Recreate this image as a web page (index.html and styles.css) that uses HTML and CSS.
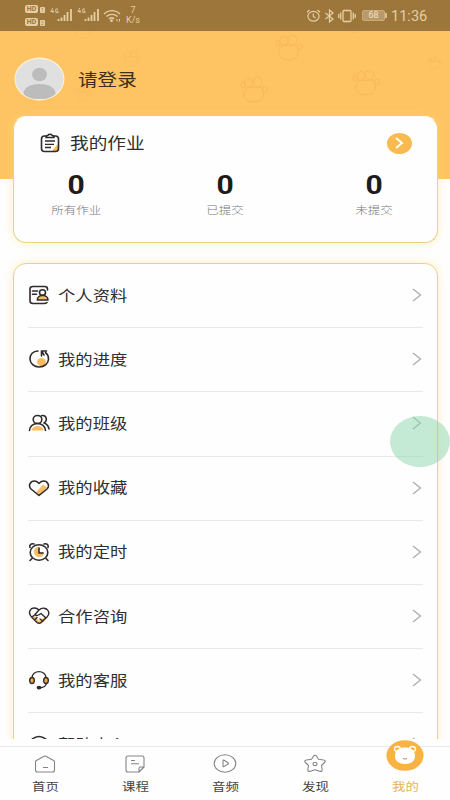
FILE: index.html
```html
<!DOCTYPE html>
<html lang="zh-CN">
<head>
<meta charset="utf-8">
<title>我的</title>
<link rel="stylesheet" href="styles.css">
</head>
<body>
<svg class="defs" width="0" height="0">
  <symbol id="paw" viewBox="0 0 28 28">
    <path d="M5 14C2 20 5 26 13 26s12-5 10-11c-1-4-4-5-8-3-4-2-8-1-10 2z"/>
    <ellipse cx="9" cy="7" rx="4" ry="4.500"/><ellipse cx="17.500" cy="6" rx="4.500" ry="5"/><ellipse cx="3" cy="9" rx="2" ry="3"/><ellipse cx="25" cy="13" rx="2.500" ry="3"/>
  </symbol>
  <symbol id="chev" viewBox="0 0 10 14"><path d="M1 1l7.500 6L1 13"/></symbol>
  <symbol id="signal" viewBox="0 0 24 16">
    <path d="M8.500 13v-2M11.500 13V9.500M14.500 13V7M17.500 13V4M21 13V1" fill="none" stroke="#e6cfa2" stroke-width="1.800"/>
    <path d="M2.800 0L.8 3.500h3M3 2v3M8 1H5.800v3.500H8V3H7" fill="none" stroke="#e6cfa2" stroke-width=".9"/>
  </symbol>
</svg>
<div class="phone">
  <div class="content">
    <header class="hero">
      <svg class="paw p1"><use href="#paw"/></svg>
      <svg class="paw p2"><use href="#paw"/></svg>
      <svg class="paw p3"><use href="#paw"/></svg>
      <svg class="paw p4"><use href="#paw"/></svg>
      <svg class="paw p5"><use href="#paw"/></svg>
      <svg class="paw p6"><use href="#paw"/></svg>
      <svg class="paw p7"><use href="#paw"/></svg>
      <svg class="paw p8"><use href="#paw"/></svg>
      <div class="status">
        <div class="hd"><div><b>HD</b><i>1</i></div><div><b>HD</b><i>2</i></div></div>
        <svg class="sig" width="24" height="16"><use href="#signal"/></svg>
        <svg class="sig" width="24" height="16"><use href="#signal"/></svg>
        <svg class="wifi" width="18" height="14" viewBox="0 0 18 14" fill="none" stroke="#e6cfa2" stroke-width="1.400"><path d="M1 5c4.500-4.500 11.500-4.500 16 0M3.500 7.600c3-3 8-3 11 0M6 10c1.800-1.600 3.700-1.600 5 0"/><circle cx="8.500" cy="11.700" r=".7"/><path d="M14 10v2.500M16.500 10v2.500" stroke-width="1"/></svg>
        <div class="speed"><span>7</span><span>K/s</span></div>
        <div class="right">
          <svg width="15" height="14" viewBox="0 0 15 14" fill="none" stroke="#e6cfa2" stroke-width="1.200"><ellipse cx="7.500" cy="7.300" rx="5.600" ry="4.900"/><path d="M7.300 4.500v3l2.300 1.500M1 3.200L3.500 1M14 3.200L11.500 1"/></svg>
          <svg width="11" height="14" viewBox="0 0 11 14" fill="none" stroke="#e6cfa2" stroke-width="1.200"><path d="M1.500 4l7.500 6-3.500 3V1L9 4l-7.500 6"/></svg>
          <svg width="18" height="14" viewBox="0 0 18 14" fill="none" stroke="#e6cfa2" stroke-width="1.300"><rect x="5" y="1.500" width="8" height="11" rx="1"/><path d="M2.700 3.500v7M.8 5v4M15.300 3.500v7M17.200 5v4"/></svg>
          <div class="battery">68</div>
          <div class="clock">11:36</div>
        </div>
      </div>
      <div class="user">
        <svg width="51" height="44" viewBox="0 0 51 44"><defs><clipPath id="av"><ellipse cx="25.500" cy="22" rx="24" ry="20.500"/></clipPath></defs><ellipse cx="25.500" cy="22" rx="25" ry="21.500" fill="#fff3d9"/><ellipse cx="25.500" cy="22" rx="24" ry="20.300" fill="#e0e0e0"/><g clip-path="url(#av)" fill="#bcbcbc"><ellipse cx="25.500" cy="17.500" rx="7.500" ry="6.700"/><path d="M9.500 42v-5c0-6 6-10 16-10s16 4 16 10v5z"/></g></svg>
        <span class="login">请登录</span>
      </div>
    </header>
    <section class="card work">
      <div class="work-head">
        <svg width="20" height="20" viewBox="0 0 20 20" fill="none" stroke="#302b2b" stroke-width="1.600"><path d="M19 12v5l-4 2-3-1 6-7z" fill="#f8ba55" stroke="none"/><rect x="1.500" y="3" width="17" height="15.500" rx="3"/><path d="M6 4.500c0-2 1.500-1.700 2-2.200 1-1.400 3-1.400 4 0 .5.500 2 .2 2 2.200z" fill="#fff"/><path d="M5 8h10M5 11.300h9M5 14.500h6" stroke-width="1.300"/></svg>
        <span class="work-title">我的作业</span>
        <span class="go"><svg width="10" height="12" viewBox="0 0 10 12" fill="none" stroke="#fff" stroke-width="2"><path d="M2 1l6 5-6 5"/></svg></span>
      </div>
      <div class="stats">
        <div><b>0</b><span>所有作业</span></div>
        <div><b>0</b><span>已提交</span></div>
        <div><b>0</b><span>未提交</span></div>
      </div>
    </section>
    <section class="card menu">
      <div class="row"><svg class="ic" viewBox="0 0 22 20"><path class="y" d="M9 15c0-3 3-4 5-4s5 1 6 4z"/><path d="M19.500 5V4q0-2.500-3-2.500H5Q2 1.500 2 4v12q0 2.500 3 2.500h11q2 0 3-1M4.500 6h5M4.500 9.300h4"/><ellipse cx="14.500" cy="7.500" rx="3" ry="2.700"/><path d="M9.300 15c0-6 10.700-6 10.700 0z"/></svg><span>个人资料</span><svg class="chev"><use href="#chev"/></svg></div>
      <div class="row"><svg class="ic" viewBox="0 0 22 20"><ellipse class="y" cx="13.500" cy="13" rx="4.500" ry="4"/><path d="M10 2C5 2 2 5.500 2 10s4 8 9.200 8 9.300-3.500 9.300-8c0-3-1-5-3-6.500M18.500 2h-5v5M13.500 2l2.500 4"/></svg><span>我的进度</span><svg class="chev"><use href="#chev"/></svg></div>
      <div class="row"><svg class="ic" viewBox="0 0 22 20"><path class="y" d="M3.500 17.500c1-6 11-6 12 0z"/><ellipse cx="9.500" cy="6.500" rx="4.300" ry="4"/><path d="M1.500 17.500c0-9.300 16-9.300 16 0M13.500 2.700c5-1.200 6.500 5 2.500 7.200 3 1 4.500 3 5 6"/></svg><span>我的班级</span><svg class="chev"><use href="#chev"/></svg></div>
      <div class="row"><svg class="ic" viewBox="0 0 22 20"><path class="y" d="M15 6.500l4 3-7 7.500-4-2.500z"/><path d="M11 17.500L3 11C0 8 2 3 6.500 3 9 3 10 4.500 11 5.500 12 4.500 13 3 15.500 3 20 3 22 8 19 11z"/></svg><span>我的收藏</span><svg class="chev"><use href="#chev"/></svg></div>
      <div class="row"><svg class="ic" viewBox="0 0 22 20"><ellipse cx="11" cy="10.500" rx="8.800" ry="7.800"/><path class="y" d="M11 10.500V5C7 5 5.500 8 6 10.500s3 5 6 4.500 4-2 4-4.500z"/><path d="M11 6v5h4M2 5.500C1 3 3.500 1 6 2M20 5.500C21 3 18.500 1 16 2M4 16.500l-2 2M18 16.500l2 2"/></svg><span>我的定时</span><svg class="chev"><use href="#chev"/></svg></div>
      <div class="row"><svg class="ic" viewBox="0 0 22 20"><path class="y" d="M4 11l3-1 4 5 6-4 2 1-6 6h-3z"/><g class="thin"><path d="M11 4C8 1 3.500 1.500 2 4.500s0 5 2 7l5 5q2 1.500 4 0l6-5.500c2-2 2.500-4 1-6.500s-6-3.500-9-.5L7 8.500q1.500 2 4.500 0L13 7.500l5 4.500M4 11l2.500-2M6.500 14l2.500-2.500M12 13l3 2"/></g></svg><span>合作咨询</span><svg class="chev"><use href="#chev"/></svg></div>
      <div class="row"><svg class="ic" viewBox="0 0 22 20"><g class="thin"><path d="M4 8c0-8.500 14-8.500 14 0M18.500 13c-.5 3-3 4.500-6 4.700"/><ellipse class="o" cx="4" cy="10.500" rx="2.300" ry="3"/><ellipse class="o" cx="18" cy="10.500" rx="2.300" ry="3"/><ellipse cx="11" cy="17.600" rx="1.700" ry="1.200" fill="#302b2b"/></g></svg><span>我的客服</span><svg class="chev"><use href="#chev"/></svg></div>
      <div class="row"><svg class="ic" viewBox="0 0 22 20"><ellipse cx="11" cy="10.500" rx="9" ry="8"/></svg><span>帮助中心</span><svg class="chev"><use href="#chev"/></svg></div>
    </section>
  </div>
  <nav class="tabs">
    <div class="tab"><svg width="22" height="18" viewBox="0 0 22 18"><path d="M1.500 7q0-1 1-1.500L10 1.300q1-.5 2 0l7.500 4.200q1 .5 1 1.500v8q0 2-2 2h-15q-2 0-2-2zM9 12.500h5"/></svg><span>首页</span></div>
    <div class="tab"><svg width="22" height="18" viewBox="0 0 22 18"><path d="M20 12V3q0-2-2-2H4Q2 1 2 3v12q0 2 2 2h11zM15 17v-3.500q0-1.500 1.500-1.500H20M7 5.500h4M7 8.800h8"/></svg><span>课程</span></div>
    <div class="tab"><svg width="24" height="19" viewBox="0 0 24 19"><ellipse cx="12" cy="9.500" rx="10.800" ry="8.700"/><path d="M10 6.700q0-1 1-.5l4 2.600q.8.600 0 1.200l-4 2.600q-1 .5-1-.5z"/></svg><span>音频</span></div>
    <div class="tab"><svg width="24" height="19" viewBox="0 0 24 19"><path d="M10.500 2.200q1.500-2 3 0l2 3 5 .8q3 .6 1 2.500l-3 3 .7 4q.2 2.500-2.500 1.700L12 15.700l-4.700 1.500q-2.700.8-2.500-1.700l.7-4-3-3q-2-2 1-2.500l5-.8z"/><ellipse cx="12" cy="10" rx="2" ry="1.700"/></svg><span>发现</span></div>
    <div class="tab on"><svg class="bear" width="38" height="31" viewBox="0 0 38 31"><ellipse cx="19" cy="15.500" rx="18.600" ry="15.300" fill="#fab343"/><g fill="#fab343" stroke="#fff" stroke-width="1.300"><ellipse cx="11.500" cy="9" rx="3" ry="2.500"/><ellipse cx="26.500" cy="9" rx="3" ry="2.500"/></g><path d="M19 7.500c6 0 10 2.500 10 8.500 0 5-4 8-10 8S9 21 9 16c0-6 4-8.500 10-8.500z" fill="#fff"/><path d="M17 18.500q2 1 4 0" fill="none" stroke="#b88d58" stroke-width="1"/></svg><span>我的</span></div>
  </nav>
  <div class="float"></div>
</div>
</body>
</html>
```
FILE: styles.css
```css
* { box-sizing: border-box; }
body { margin: 0; font-family: "Noto Sans CJK SC", sans-serif; color: #302e2e; }
.defs { position: absolute; }
.phone { position: relative; width: 450px; height: 800px; overflow: hidden; background: #fefefe; display: flex; flex-direction: column; }
.content { height: 739px; flex: none; overflow: hidden; }

.hero { position: relative; height: 179px; background: #fec464; }
.status { position: relative; height: 31px; background: #9c763b; display: flex; align-items: center; padding: 0 22px 0 25px; color: #e6cfa2; font-family: Roboto, sans-serif; }
.hd { display: flex; flex-direction: column; gap: 5px; width: 23px; }
.hd div { display: flex; align-items: flex-end; gap: 2px; height: 8px; }
.hd b { width: 13px; height: 8px; line-height: 8px; font-size: 7px; text-align: center; border-radius: 2px; background: #e6cfa2; color: #9c763b; }
.hd i { width: 5px; height: 6px; line-height: 6px; font-size: 5px; font-style: normal; text-align: center; border-radius: 1px; background: #e6cfa2; color: #9c763b; }
.sig { margin: 1px 1px 0 2px; }
.sig + .sig { margin-left: 2px; }
.wifi { margin-left: 1px; }
.speed { display: flex; flex-direction: column; align-items: center; width: 18px; margin: -1px 0 0 3px; font-size: 9px; line-height: 10px; }
.right { margin-left: auto; display: flex; align-items: center; }
.right svg { margin-right: 3px; }
.right svg:last-of-type { margin-right: 0; }
.battery { position: relative; width: 23px; height: 11px; margin: 0 4px 0 6px; border: 1px solid #c8ab78; border-radius: 2px; background: #b8996a; font-size: 9px; line-height: 9px; text-align: center; color: #f3e3c3; }
.battery::after { content: ""; position: absolute; right: -3px; top: 2px; width: 2px; height: 5px; background: #d8bd8c; }
.clock { width: 37px; margin-left: 2px; font-size: 14px; line-height: 16px; white-space: nowrap; transform: scaleX(1.04); transform-origin: left; }

.paw { position: absolute; width: 28px; height: 28px; fill: none; stroke: #efb04f; stroke-width: 1; opacity: .5; }
.p1 { left: 275px; top: 34px; }
.p2 { left: 240px; top: 76px; }
.p3 { left: 352px; top: 69px; }
.p4 { left: 428px; top: 54px; width: 14px; height: 18px; }
.p5 { left: 122px; top: 50px; width: 19px; height: 18px; opacity: .4; }
.p6 { left: 72px; top: 20px; width: 22px; height: 20px; opacity: .4; }
.p7 { left: 343px; top: 14px; width: 22px; height: 20px; opacity: .4; }
.p8 { left: 74px; top: 85px; width: 20px; height: 17px; opacity: .35; }

.user { position: relative; display: flex; align-items: center; height: 44px; margin: 26px 0 0 14px; }
.login { margin-left: 13px; font-size: 16.600px; line-height: 24px; color: #3d2f1a; transform: scaleX(1.18); transform-origin: left; }

.card { position: relative; margin: 0 12.500px; background: #fefefe; border: 1.500px solid #ecd184; border-radius: 13px; box-shadow: 0 0 8px 1px rgba(255, 222, 110, .35); }
.work { height: 127px; margin-top: -63px; padding: 15px 25px 0 26px; border-top-color: #fffaf0; }
.work-head { display: flex; align-items: center; height: 22px; }
.work-title { margin: -1px 0 0 10px; font-size: 15.800px; line-height: 22px; transform: scaleX(1.18); transform-origin: left; }
.go { margin-left: auto; width: 25px; height: 21px; border-radius: 50%; background: #f9ba50; display: flex; align-items: center; justify-content: center; }
.stats { display: flex; margin: 17px -52px 0 -38px; width: 447px; }
.stats div { width: 149px; display: flex; flex-direction: column; align-items: center; }
.stats b { font-family: Roboto, sans-serif; font-weight: 700; font-size: 25px; line-height: 30px; color: #1d1b1b; transform: scaleX(1.200); }
.stats span { font-size: 10.600px; line-height: 17px; font-weight: 300; color: #777; transform: scaleX(1.18); }

.menu { margin-top: 20px; height: 530px; padding: 0 14px; }
.row { height: 64.200px; display: flex; align-items: center; border-bottom: 1px solid #e9e9eb; padding: 0 1px 1px 0; }
.ic { width: 22px; height: 20px; flex: none; fill: none; stroke: #302b2b; stroke-width: 1.600; stroke-linecap: round; stroke-linejoin: round; }
.ic .y { fill: #f8bd62; stroke: none; }
.ic .o { fill: #f2a94c; }
.ic .thin { stroke-width: 1.400; }
.row span { margin: -1px 0 0 8px; font-size: 14.700px; line-height: 20px; transform: scaleX(1.18); transform-origin: left; }
.chev { margin-left: auto; width: 10px; height: 14px; fill: none; stroke: #aaa8aa; stroke-width: 1.200; }

.tabs { margin-top: 7px; height: 54px; border-top: 1px solid #e8e8eb; display: flex; background: #fefefe; }
.tab { width: 90px; display: flex; flex-direction: column; align-items: center; justify-content: flex-end; padding-bottom: 5px; fill: none; stroke: #858388; stroke-width: 1.100; stroke-linejoin: round; }
.tab > svg { flex: none; margin-bottom: 4px; }
.tab span { font-size: 11.400px; line-height: 18px; color: #444; transform: scaleX(1.18); }
.tab.on span { color: #e3b458; }
.tab .bear { stroke: none; margin-bottom: 6px; }
.float { position: absolute; left: 390px; top: 415.500px; width: 60px; height: 51px; border-radius: 50%; background: rgba(137, 213, 172, .5); }
```
